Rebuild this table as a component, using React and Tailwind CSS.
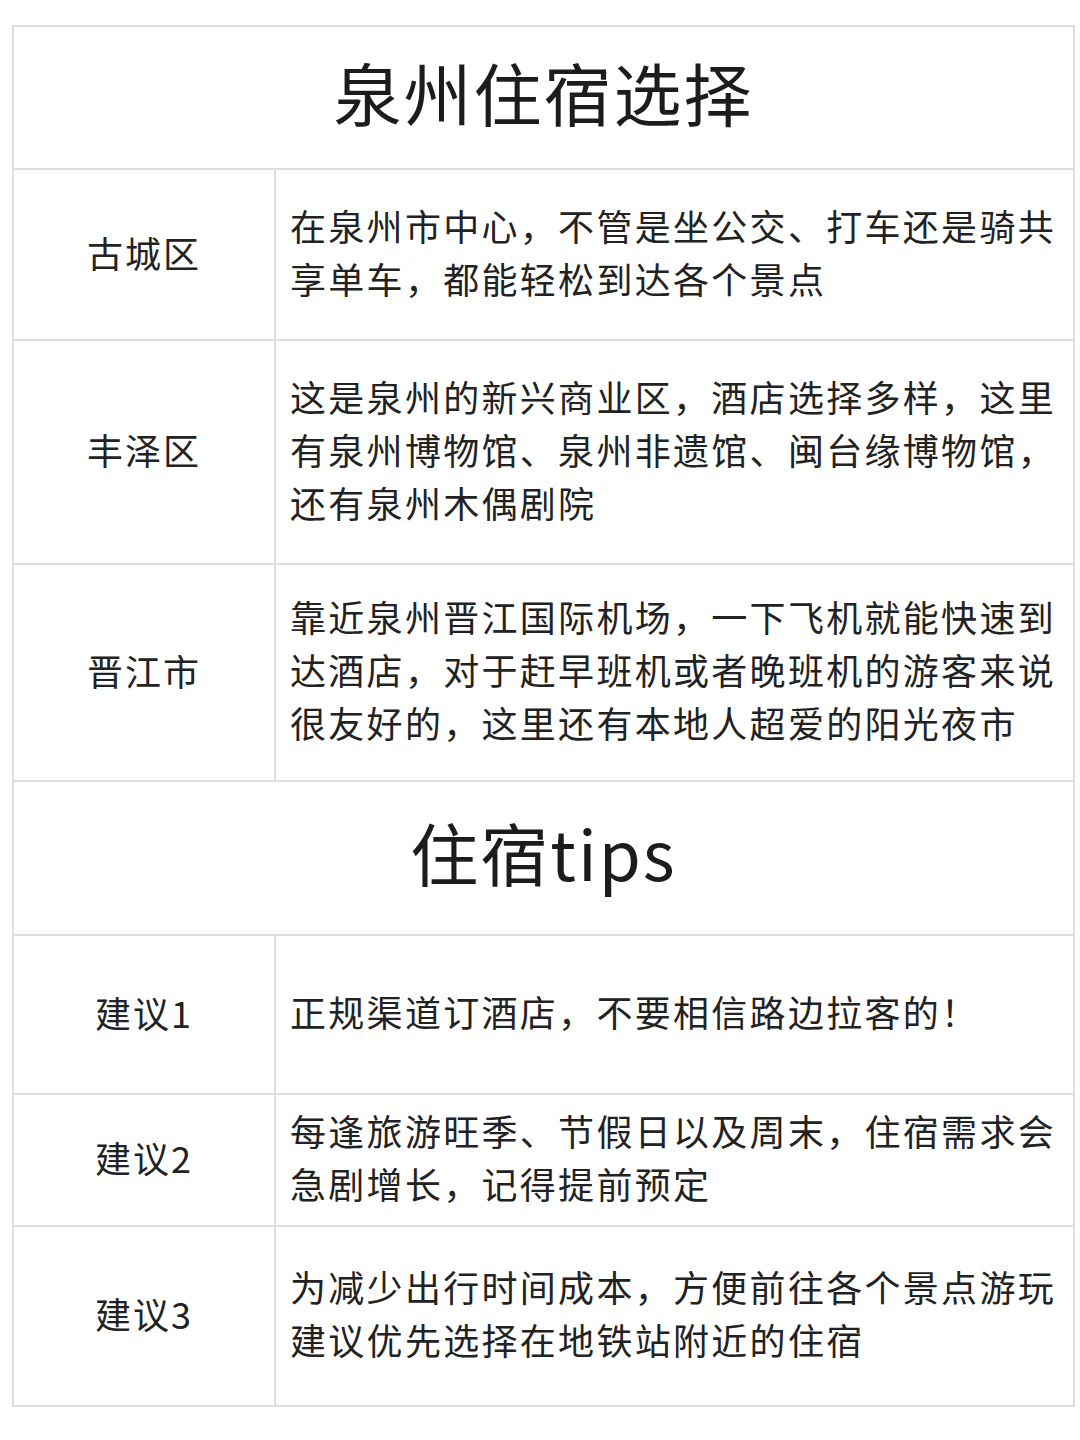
import React from "react";

const font = { fontFamily: '"Noto Sans CJK SC", "Noto Sans", sans-serif' };

const areas = [
  { name: "古城区", h: "h-[171px]", text: "在泉州市中心，不管是坐公交、打车还是骑共享单车，都能轻松到达各个景点" },
  { name: "丰泽区", h: "h-[224px]", text: "这是泉州的新兴商业区，酒店选择多样，这里有泉州博物馆、泉州非遗馆、闽台缘博物馆，还有泉州木偶剧院" },
  { name: "晋江市", h: "h-[217px]", text: "靠近泉州晋江国际机场，一下飞机就能快速到达酒店，对于赶早班机或者晚班机的游客来说很友好的，这里还有本地人超爱的阳光夜市" },
];

const tips = [
  { name: "建议1", h: "h-[159px]", text: "正规渠道订酒店，不要相信路边拉客的！" },
  { name: "建议2", h: "h-[132px]", text: "每逢旅游旺季、节假日以及周末，住宿需求会急剧增长，记得提前预定" },
  { name: "建议3", h: "h-[178px]", text: "为减少出行时间成本，方便前往各个景点游玩建议优先选择在地铁站附近的住宿", last: true },
];

function Row({ name, h, text, last }) {
  return (
    <div className={`flex ${h} ${last ? "" : "border-b-2 border-[#dedede]"}`}>
      <div className="w-[262px] shrink-0 border-r-2 border-[#dedede] flex items-center justify-center pb-[6px] text-[36px] tracking-[2px] text-[#222]">
        {name}
      </div>
      <div className="flex-1 flex items-center pl-[14px] pr-[10px] pb-[6px] text-[36px] tracking-[2.3px] leading-[53px] text-[#222]">
        <p>{text}</p>
      </div>
    </div>
  );
}

function Heading({ children, h }) {
  return (
    <div className={`${h} border-b-2 border-[#dedede] flex items-center justify-center pb-[12px] text-[68px] tracking-[2px] text-[#1c1c1c]`}>
      {children}
    </div>
  );
}

export default function App() {
  return (
    <div className="w-[1080px] h-[1440px] bg-white overflow-hidden" style={font}>
      <div className="ml-[12px] mt-[25px] w-[1063px] border-2 border-[#dedede]">
        <Heading h="h-[143px]">泉州住宿选择</Heading>
        {areas.map((a) => <Row key={a.name} {...a} />)}
        <Heading h="h-[154px]">住宿tips</Heading>
        {tips.map((t) => <Row key={t.name} {...t} />)}
      </div>
    </div>
  );
}
